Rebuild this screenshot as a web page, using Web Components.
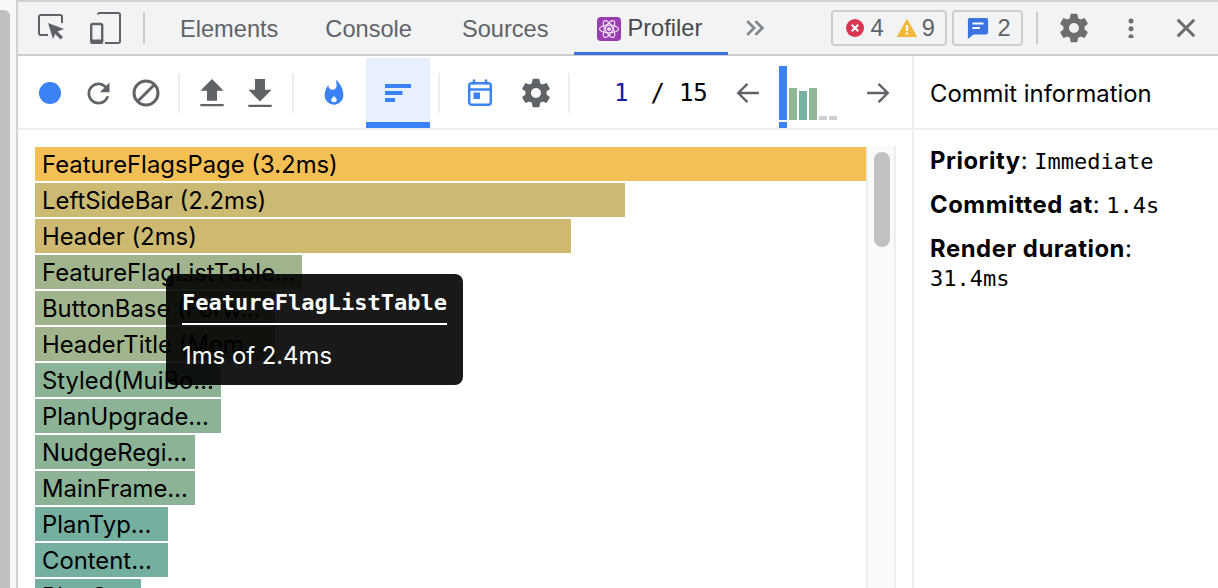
<!DOCTYPE html>
<html>
<head>
<meta charset="utf-8">
<title>Profiler</title>
<style>
  html, body { margin: 0; height: 588px; overflow: hidden; background: #fff; }
</style>
</head>
<body>
<devtools-app></devtools-app>
<script>
const GEAR = 'M19.43 12.98c.04-.32.07-.64.07-.98s-.03-.66-.07-.98l2.11-1.65c.19-.15.24-.42.12-.64l-2-3.46c-.12-.22-.39-.3-.61-.22l-2.49 1c-.52-.4-1.08-.73-1.69-.98l-.38-2.65C14.46 2.18 14.25 2 14 2h-4c-.25 0-.46.18-.49.42l-.38 2.65c-.61.25-1.17.59-1.69.98l-2.49-1c-.23-.09-.49 0-.61.22l-2 3.46c-.13.22-.07.49.12.64l2.11 1.65c-.04.32-.07.65-.07.98s.03.66.07.98l-2.11 1.65c-.19.15-.24.42-.12.64l2 3.46c.12.22.39.3.61.22l2.49-1c.52.4 1.08.73 1.69.98l.38 2.65c.03.24.24.42.49.42h4c.25 0 .46-.18.49-.42l.38-2.65c.61-.25 1.17-.59 1.69-.98l2.49 1c.23.09.49 0 .61-.22l2-3.46c.12-.22.07-.49-.12-.64l-2.11-1.65zM12 15.5c-1.93 0-3.5-1.57-3.5-3.5s1.57-3.5 3.5-3.5 3.5 1.57 3.5 3.5-1.57 3.5-3.5 3.5z';

// every icon is [viewBox size, inner svg markup]
const ICONS = {
  inspect: [32, `<path d="M12 23H5a2 2 0 0 1-2-2V5a2 2 0 0 1 2-2h19a2 2 0 0 1 2 2v6" fill="none" stroke="currentColor" stroke-width="2"/>
    <path d="M12 11l16 6-6.500 2.600 5.500 5.500-2.400 2.400-5.500-5.500L17 27z" fill="currentColor"/>`],
  device: [32, `<path d="M9 2.500a1.500 1.500 0 0 1 1.500-1.500h19a1.500 1.500 0 0 1 1.500 1.500v27a1.500 1.500 0 0 1-1.500 1.500H16" fill="none" stroke="currentColor" stroke-width="2"/>
    <rect x="2.200" y="12" width="11" height="19" rx="1.500" fill="none" stroke="currentColor" stroke-width="2.400"/>
    <rect x="2" y="27.500" width="12" height="3.500" fill="currentColor"/>`],
  reload: [24, '<path fill="currentColor" d="M17.65 6.35C16.2 4.9 14.21 4 12 4c-4.42 0-7.99 3.58-7.99 8s3.57 8 7.99 8c3.73 0 6.84-2.55 7.73-6h-2.08c-.82 2.33-3.04 4-5.65 4-3.31 0-6-2.69-6-6s2.69-6 6-6c1.66 0 3.14.69 4.22 1.78L13 11h7V4l-2.35 2.35z"/>'],
  clear: [32, '<circle cx="16" cy="16" r="12" fill="none" stroke="currentColor" stroke-width="3"/><path d="M7.500 24.500l17-17" stroke="currentColor" stroke-width="3"/>'],
  upload: [24, '<path fill="currentColor" d="M9 16h6v-6h4l-7-7-7 7h4zm-4 2h14v1.400H5z"/>'],
  download: [24, '<path fill="currentColor" d="M19 9.500h-4V3H9v6.500H5l7 7zM5 18.400v1.400h14v-1.400z"/>'],
  flame: [24, '<path fill="currentColor" d="M13.500.67s.74 2.650.74 4.800c0 2.060-1.350 3.730-3.410 3.730-2.070 0-3.630-1.670-3.630-3.730l.03-.36C5.210 7.510 4 10.620 4 14c0 4.420 3.580 8 8 8s8-3.580 8-8C20 8.610 17.410 3.800 13.500.67zM12 20c-1.400 0-2.400-.8-2.400-1.900 0-1 1-2.100 2.400-3.600 1.400 1.500 2.400 2.600 2.400 3.600 0 1.100-1 1.900-2.400 1.900z"/>'],
  ranked: [32, '<g fill="currentColor"><rect x="3" y="7" width="26" height="4"/><rect x="3" y="14" width="17.500" height="4"/><rect x="3" y="21" width="10" height="4"/></g>'],
  calendar: [32, `<g fill="none" stroke="currentColor" stroke-width="2.500"><rect x="5.200" y="6.200" width="21.600" height="21.600" rx="2.500"/><path d="M5 12.500h22M10 2.500v5M22 2.500v5"/></g>
    <rect x="9.500" y="15.500" width="6.500" height="6.500" fill="currentColor"/>`],
  gear: [24, `<path fill="currentColor" d="${GEAR}"/>`],
  back: [24, '<path d="M22 12H3M11.500 3.500L3 12l8.500 8.500" fill="none" stroke="currentColor" stroke-width="2.200"/>'],
  forward: [24, '<path d="M2 12H21M12.500 3.500L21 12l-8.500 8.500" fill="none" stroke="currentColor" stroke-width="2.200"/>'],
  chevrons: [24, '<path d="M3.500 4.500L11 12l-7.500 7.500M12.500 4.500L20 12l-7.500 7.500" fill="none" stroke="currentColor" stroke-width="3"/>'],
  dots: [24, '<g fill="currentColor"><circle cx="12" cy="3.500" r="3"/><circle cx="12" cy="13" r="3"/><circle cx="12" cy="22.500" r="3"/></g>'],
  close: [24, '<path d="M3 3l18 18M21 3L3 21" stroke="currentColor" stroke-width="3.400"/>'],
  error: [20, '<circle cx="10" cy="10" r="9" fill="#d93651"/><path d="M6.700 6.700l6.600 6.600M13.300 6.700l-6.600 6.600" stroke="#fff" stroke-width="2"/>'],
  warning: [20, '<path d="M10 1.500L19.500 18.500H.5z" fill="#f0b93a" stroke="#f0b93a" stroke-linejoin="round"/><path d="M10 7v6M10 14.500v2" stroke="#fff" stroke-width="2.200"/>'],
  chat: [24, '<path d="M3 1h18a2 2 0 0 1 2 2v14a2 2 0 0 1-2 2H7l-6 5V3a2 2 0 0 1 2-2z" fill="#3b74e0"/><path d="M6 7h12M6 12h8" stroke="#fff" stroke-width="2.200"/>'],
  atom: [24, `<rect width="24" height="24" rx="4" fill="#9a3db0"/>
    <g fill="none" stroke="#f3dff7" stroke-width="1.200"><ellipse cx="12" cy="12" rx="9.500" ry="3.800"/><ellipse cx="12" cy="12" rx="9.500" ry="3.800" transform="rotate(60 12 12)"/><ellipse cx="12" cy="12" rx="9.500" ry="3.800" transform="rotate(120 12 12)"/></g>
    <circle cx="12" cy="12" r="2" fill="#f3dff7"/>`]
};

class DtIcon extends HTMLElement {
  constructor() {
    super();
    this.shadow = this.attachShadow({ mode: 'open' });
    const size = this.getAttribute('size') || 24;
    const icon = ICONS[this.getAttribute('name')];
    this.shadow.innerHTML = `<style>
      :host { display: inline-flex; flex: none; width: ${size}px; height: ${size}px; }
      svg { display: block; width: 100%; height: 100%; }
    </style>
    <svg viewBox="0 0 ${icon[0]} ${icon[0]}">${icon[1]}</svg>`;
  }
}
customElements.define('dt-icon', DtIcon);

class DtSeparator extends HTMLElement {
  constructor() {
    super();
    this.attachShadow({ mode: 'open' }).innerHTML = `<style>
      :host { display: block; flex: none; width: 2px; height: var(--sep-height, 40px); background: var(--sep-color, #eeeeee); margin: 0 8px; }
    </style>`;
  }
}
customElements.define('dt-separator', DtSeparator);

class DtTabbar extends HTMLElement {
  constructor() {
    super();
    this.attachShadow({ mode: 'open' }).innerHTML = `<style>
      :host {
        display: flex; align-items: center; height: 52px; margin-top: 2px;
        background: #f1f3f4; border-bottom: 2px solid #cbcdd1;
        color: #5f6368;
        font: 23.6px "Liberation Sans", Arial, sans-serif;
        --sep-height: 32px; --sep-color: #cbcdd1;
      }
      dt-separator { margin: 0; }
      .tab { flex: none; height: 52px; display: flex; align-items: center; box-sizing: border-box; padding-top: 2px; }
      .active { color: #45494d; width: 154px; padding-left: 23px; padding-top: 3px; gap: 7px; border-bottom: 3px solid #3b74e0; height: 53px; position: relative; top: 0.5px; }
      .badge {
        display: flex; align-items: center; box-sizing: border-box; height: 36px; flex: none;
        border: 2px solid #cbcdd1; border-radius: 4px;
      }
    </style>
    <dt-icon name="inspect" size="32" style="margin-left:18px;color:#5f6368"></dt-icon>
    <dt-icon name="device" size="32" style="margin-left:21px;color:#5f6368"></dt-icon>
    <dt-separator style="margin-left:22px"></dt-separator>
    <div class="tab" style="margin-left:35px">Elements</div>
    <div class="tab" style="margin-left:47px">Console</div>
    <div class="tab" style="margin-left:50px">Sources</div>
    <div class="tab active" style="margin-left:25px"><dt-icon name="atom" size="24"></dt-icon>Profiler</div>
    <dt-icon name="chevrons" size="22" style="margin-left:16px;color:#80868b"></dt-icon>
    <div class="badge" style="margin-left:65px;width:116px;padding-left:12px;color:#5f6368">
      <dt-icon name="error" size="20"></dt-icon><span style="margin-left:6px">4</span>
      <dt-icon name="warning" size="20" style="margin-left:13px"></dt-icon><span style="margin-left:5px">9</span>
    </div>
    <div class="badge" style="margin-left:5px;width:71px;padding-left:13px">
      <dt-icon name="chat" size="22"></dt-icon><span style="margin-left:9px">2</span>
    </div>
    <dt-separator style="margin-left:13px"></dt-separator>
    <dt-icon name="gear" size="34" style="margin-left:19px;color:#6e6e6e"></dt-icon>
    <dt-icon name="dots" size="20" style="margin-left:30px;color:#6e6e6e"></dt-icon>
    <dt-icon name="close" size="22" style="margin-left:34px;color:#6e6e6e"></dt-icon>`;
  }
}
customElements.define('dt-tabbar', DtTabbar);

class ToolButton extends HTMLElement {
  constructor() {
    super();
    const width = this.getAttribute('width') || 48;
    const active = this.hasAttribute('active');
    this.attachShadow({ mode: 'open' }).innerHTML = `<style>
      :host {
        display: flex; flex: none; align-items: center; justify-content: center; box-sizing: border-box;
        width: ${width}px; height: 70px; color: ${this.getAttribute('color') || '#5f6368'};
        ${active ? 'background: #e8f0fe; border-bottom: 6px solid #3b82f6; padding-top: 6px;' : ''}
      }
    </style><slot></slot>`;
  }
}
customElements.define('tool-button', ToolButton);

class CommitBars extends HTMLElement {
  constructor() {
    super();
    this.attachShadow({ mode: 'open' }).innerHTML = `<style>
      :host { display: flex; flex: none; gap: 2px; align-items: flex-end; height: 54px; position: relative; }
      i { display: block; width: 8px; }
      .sel { position: absolute; left: 0; top: 56px; width: 8px; height: 6px; background: #3b82f6; }
    </style>
    <i style="height:54px;background:#3b82f6"></i>
    <i style="height:32px;background:#8eb796"></i>
    <i style="height:29px;background:#76b0a0"></i>
    <i style="height:32px;background:#8eb796"></i>
    <i style="height:4px;background:#d0d0d4"></i>
    <i style="height:4px;background:#d0d0d4"></i>
    <div class="sel"></div>`;
  }
}
customElements.define('commit-bars', CommitBars);

class ProfilerToolbar extends HTMLElement {
  constructor() {
    super();
    this.attachShadow({ mode: 'open' }).innerHTML = `<style>
      :host {
        display: flex; align-items: flex-end; height: 74px; box-sizing: border-box; padding-left: 8px;
        border-bottom: 2px solid #eeeeee;
      }
      dt-separator { align-self: center; margin-top: 2px; margin-bottom: 0; }
      .record { width: 22px; height: 22px; border-radius: 50%; background: #3b82f6; }
      .count { display: flex; flex: none; align-self: center; margin-top: 2px; width: 157px; font: 24px/30px "DejaVu Sans Mono", "Liberation Mono", monospace; color: #000; }
      .count b { font-weight: normal; color: #1a1aa6; margin-left: 36px; }
      .count span { margin-left: 22px; }
      .count em { font-style: normal; margin-left: 14px; }
      .nudge { margin-top: 2px; }
    </style>
    <tool-button><div class="record"></div></tool-button>
    <tool-button><dt-icon name="reload" size="33"></dt-icon></tool-button>
    <tool-button><dt-icon name="clear" size="32"></dt-icon></tool-button>
    <dt-separator></dt-separator>
    <tool-button><dt-icon class="nudge" name="upload" size="40"></dt-icon></tool-button>
    <tool-button><dt-icon class="nudge" name="download" size="40"></dt-icon></tool-button>
    <dt-separator></dt-separator>
    <tool-button width="64" color="#3b82f6"><dt-icon name="flame" size="28"></dt-icon></tool-button>
    <tool-button width="64" color="#3b82f6" active><dt-icon name="ranked" size="32"></dt-icon></tool-button>
    <dt-separator></dt-separator>
    <tool-button width="64" color="#3b82f6"><dt-icon name="calendar" size="32"></dt-icon></tool-button>
    <tool-button><dt-icon name="gear" size="34"></dt-icon></tool-button>
    <dt-separator></dt-separator>
    <div class="count"><b>1</b><span>/</span><em>15</em></div>
    <slot></slot>`;
  }
}
customElements.define('profiler-toolbar', ProfilerToolbar);

class FlameBar extends HTMLElement {
  constructor() {
    super();
    this.attachShadow({ mode: 'open' }).innerHTML = `<style>
      :host {
        display: block; box-sizing: border-box; height: 34px; padding-left: 7px; margin-bottom: 2px;
        width: ${this.getAttribute('width')}px; background: ${this.getAttribute('color')};
        font: 23.85px/36px Inter, "Noto Sans", sans-serif; color: #000; white-space: nowrap; overflow: hidden;
      }
    </style><slot></slot>`;
  }
}
customElements.define('flame-bar', FlameBar);

class ChartTooltip extends HTMLElement {
  constructor() {
    super();
    this.attachShadow({ mode: 'open' }).innerHTML = `<style>
      :host {
        position: absolute; left: 148px; top: 144px; box-sizing: border-box; width: 297px; height: 111px;
        padding: 16px; border-radius: 8px; background: rgba(0, 0, 0, .9); color: #fff;
        font: 23.85px Inter, "Noto Sans", sans-serif;
      }
      .title { font: bold 22px/26px "DejaVu Sans Mono", monospace; height: 33px; border-bottom: 2px solid #fff; }
      .body { margin-top: 16px; line-height: 30px; }
    </style>
    <div class="title"><slot name="title"></slot></div>
    <div class="body"><slot></slot></div>`;
  }
}
customElements.define('chart-tooltip', ChartTooltip);

class FlameChart extends HTMLElement {
  constructor() {
    super();
    const rows = [
      ['FeatureFlagsPage (3.2ms)', 831, '#f4bf55'],
      ['LeftSideBar (2.2ms)', 590, '#cbba72'],
      ['Header (2ms)', 536, '#cdb96f'],
      ['FeatureFlagListTable…', 267, '#a0b58d'],
      ['ButtonBase (Forw…', 240, '#a0b58d'],
      ['HeaderTitle (Mem…', 240, '#a0b58d'],
      ['Styled(MuiBo…', 186, '#8cb396'],
      ['PlanUpgrade…', 186, '#8cb396'],
      ['NudgeRegi…', 160, '#8cb396'],
      ['MainFrame…', 160, '#8cb396'],
      ['PlanTyp…', 133, '#74afa0'],
      ['Content…', 133, '#74afa0'],
      ['PlanCar…', 106, '#74afa0']
    ];
    this.attachShadow({ mode: 'open' }).innerHTML = `<style>
      :host { display: flex; position: relative; flex: none; width: 894px; height: 458px; overflow: hidden; }
      .bars { flex: none; box-sizing: border-box; width: 848px; padding: 17px 0 0 17px; }
      .track {
        flex: none; box-sizing: border-box; width: 30px; height: 442px; margin-top: 16px;
        background: #fafafa; border: solid #eeeeee; border-width: 0 2px; padding: 6px 6px 0;
      }
      .thumb { width: 16px; height: 95px; border-radius: 8px; background: #c1c1c1; }
    </style>
    <div class="bars">${rows.map(r => `<flame-bar width="${r[1]}" color="${r[2]}">${r[0]}</flame-bar>`).join('')}</div>
    <div class="track"><div class="thumb"></div></div>
    <chart-tooltip><span slot="title">FeatureFlagListTable</span>1ms of 2.4ms</chart-tooltip>`;
  }
}
customElements.define('flame-chart', FlameChart);

class CommitInfo extends HTMLElement {
  constructor() {
    super();
    this.attachShadow({ mode: 'open' }).innerHTML = `<style>
      :host { display: block; flex: 1; border-left: 2px solid #eeeeee; font: 23.85px/29px Inter, "Noto Sans", sans-serif; color: #000; }
      .head { box-sizing: border-box; border-bottom: 2px solid #eeeeee; height: 74px; padding: 22px 0 0 16px; line-height: 32px; }
      .list { padding: 16px 16px 0; }
      p { margin: 0 0 15px; }
      strong { font-weight: 700; letter-spacing: .55px; }
      code { font: 22px/1 "DejaVu Sans Mono", monospace; }
    </style>
    <div class="head">Commit information</div>
    <div class="list">
      <p><strong>Priority</strong>: <code>Immediate</code></p>
      <p><strong>Committed at</strong>: <code>1.4s</code></p>
      <p><strong>Render duration</strong>:<br><code>31.4ms</code></p>
    </div>`;
  }
}
customElements.define('commit-info', CommitInfo);

class DevtoolsApp extends HTMLElement {
  constructor() {
    super();
    this.attachShadow({ mode: 'open' }).innerHTML = `<style>
      :host { display: flex; flex-direction: column; width: 1218px; height: 588px; overflow: hidden; }
      .topline { flex: none; height: 2px; margin-bottom: -2px; background: #d0d1d4; }
      .row { flex: 1; display: flex; min-height: 0; }
      .pagebar { flex: none; width: 16px; padding-top: 10px; box-sizing: border-box; background: #f8f8f8; }
      .pagebar div { width: 10px; height: 100%; background: #c0c0c0; border-top-right-radius: 6px; }
      .panel { flex: 1; min-width: 0; border-left: 2px solid #d0d1d4; }
      .split { display: flex; height: 532px; }
      .left { flex: none; width: 894px; }
      .arrows { display: flex; align-items: center; align-self: flex-start; flex: none; box-sizing: border-box; height: 72px; padding-top: 2px; }
      .arrows commit-bars { align-self: flex-start; margin: 8px 28px 0 18px; }
    </style>
    <div class="topline"></div>
    <div class="row">
      <div class="pagebar"><div></div></div>
      <div class="panel">
        <dt-tabbar></dt-tabbar>
        <div class="split">
          <div class="left">
            <profiler-toolbar>
              <div class="arrows">
                <dt-icon name="back" size="26" style="color:#5f6368"></dt-icon>
                <commit-bars></commit-bars>
                <dt-icon name="forward" size="26" style="color:#5f6368"></dt-icon>
              </div>
            </profiler-toolbar>
            <flame-chart></flame-chart>
          </div>
          <commit-info></commit-info>
        </div>
      </div>
    </div>`;
  }
}
customElements.define('devtools-app', DevtoolsApp);
</script>
</body>
</html>
